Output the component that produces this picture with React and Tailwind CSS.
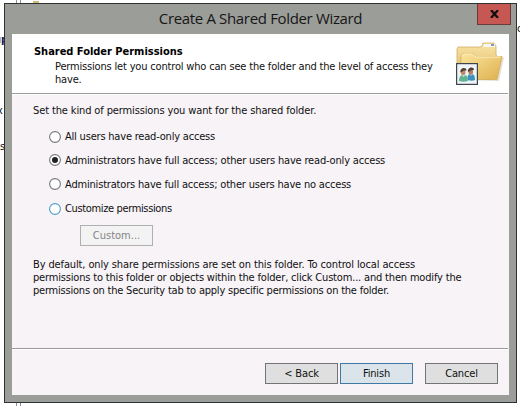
import React, { useState } from 'react';

const options = [
  { id: 'read', label: 'All users have read-only access', row: 'h-[23px]', track: 'tracking-[-0.2px]' },
  { id: 'admin-read', label: 'Administrators have full access; other users have read-only access', row: 'h-6', track: 'tracking-[-0.175px]' },
  { id: 'admin-only', label: 'Administrators have full access; other users have no access', row: 'h-6', track: 'tracking-[-0.185px]' },
  { id: 'custom', label: 'Customize permissions', row: 'h-[25px]', track: 'tracking-[-0.36px]' },
];

const FolderIcon = () => (
  <svg width="48" height="46" viewBox="0 0 48 46">
    <defs>
      <linearGradient id="front" x1="0" y1="0" x2="1" y2="1">
        <stop offset="0" stopColor="#fbe6a0" />
        <stop offset="1" stopColor="#dfb04e" />
      </linearGradient>
      <linearGradient id="back" x1="0" y1="0" x2="0" y2="1">
        <stop offset="0" stopColor="#f8e4a6" />
        <stop offset="1" stopColor="#dcb660" />
      </linearGradient>
    </defs>
    <path d="M6 39h37l5-24-3 1-4 22z" fill="#d8d3c6" opacity=".7" />
    <path d="M1 37V7l1-2h22l2-1 1-3h11l2 3v9l2 2-5 22z" fill="url(#back)" stroke="#d0ad62" strokeWidth=".8" />
    <path d="M27 4l1-2h11v3H27z" fill="#f7f7f2" />
    <path d="M35 3h3" stroke="#5078b0" strokeWidth="1.500" />
    <path d="M4.500 37.500l.5-23 2-3h10l3 3h26l-5 23z" fill="url(#front)" stroke="#d3ab54" strokeWidth=".8" />
    <path d="M6 14l1.500-2h9l3 3h25" fill="none" stroke="#fff3c4" />
    <rect x="0.600" y="21.600" width="20.800" height="20.800" fill="#eef3f5" stroke="#3d454e" strokeWidth="1.200" />
    <path d="M3 39c0-5 2-6 5-6s4 2 4 6c-3 1-6 1-9 0z" fill="#62b392" />
    <path d="M12 38c-1-4 0-6 3-6s4 2 4 6c-2 1-5 1-7 0z" fill="#3d91bd" />
    <path d="M6.500 33l1 2 1.500-2zM14 32l1 2 1-2z" fill="#e9f3f3" />
    <ellipse cx="7.200" cy="30.300" rx="2.300" ry="3" fill="#c18a66" />
    <ellipse cx="14.700" cy="29.800" rx="2.300" ry="3" fill="#b57d5c" />
    <path d="M4.500 30.500c-1-5 6-6 6-2-2 0-4 0-4 1zM12 30c-1-5 6-6 6-2-2 0-4 0-4 1z" fill="#513a30" />
  </svg>
);

const Radio = ({ checked, hot }) => (
  <svg width="12" height="12" viewBox="0 0 12 12" className="shrink-0">
    <circle cx="6" cy="6" r="5.4" fill="#fff" stroke={hot ? '#4c9fc8' : '#77777a'} strokeWidth="1.1" />
    {checked && <circle cx="6" cy="6" r="3" fill="#202020" />}
  </svg>
);

const App = () => {
  const [selected, setSelected] = useState('admin-read');

  return (
    <div className="relative w-[520px] h-[406px] overflow-hidden bg-white pl-1 pt-[3px] text-[11px] leading-[13px] text-[#101010] font-['DejaVu_Sans_Condensed','DejaVu_Sans',sans-serif]">
      {/* parts of the window behind the wizard */}
      <div className="absolute left-4 top-0 h-[406px] w-[5px] border-x border-[#8d9097]" />
      <div className="absolute left-[33px] top-[1px] h-[2px] w-[6px] bg-[#cfba7c]" />
      <span className="absolute left-[-6px] top-[33px] font-bold text-[#2a1b4a]">up</span>
      <span className="absolute left-[-3px] top-[104px]">x</span>
      <span className="absolute left-0 top-[140px]">s</span>
      <span className="absolute left-[517px] top-[22px]">c</span>

      <div className="relative flex h-[400px] w-[513px] flex-col border border-[#303336] bg-[#9b9d99] px-[7px] pb-[7px]">
        <div className="relative h-[30px] shrink-0">
          <h1 className="pt-[4px] text-center text-[15px] leading-5 tracking-[-0.34px] font-['Open_Sans',sans-serif] text-[#161616]">
            Create A Shared Folder Wizard
          </h1>
          <button className="absolute -right-[2px] top-0 flex h-[21px] w-[34px] items-center justify-center border border-t-0 border-[#693c39] bg-[#c65752]">
            <svg width="9" height="8" viewBox="0 0 9 8">
              <path d="M1 0l7 8M8 0L1 8" stroke="#141010" strokeWidth="2.3" />
            </svg>
          </button>
        </div>

        <div className="flex h-[59px] shrink-0 bg-white pl-[22px]">
          <div className="flex-1 pt-[11px] whitespace-nowrap">
            <h2 className="font-bold tracking-[-0.02px] text-black">Shared Folder Permissions</h2>
            <p className="pl-[21px] pt-[2px] tracking-[-0.175px]">
              Permissions let you control who can see the folder and the level of access they
              <br />
              have.
            </p>
          </div>
          <div className="mr-[5px] mt-[8px] w-[48px] shrink-0">
            <FolderIcon />
          </div>
        </div>

        <div className="flex flex-1 flex-col bg-[#f7f3f7]">
          <div className="mr-px h-[2px] border-t border-b border-t-[#9b9b9e] border-b-white" />
          <div className="h-[253px] whitespace-nowrap pl-[21px] pt-[9px]">
            <p className="tracking-[-0.125px]">Set the kind of permissions you want for the shared folder.</p>
            <div className="pl-4 pt-[8px]">
              {options.map((option) => (
                <label
                  key={option.id}
                  className={`flex items-center gap-1 ${option.row} ${option.track}`}
                  onClick={() => setSelected(option.id)}
                >
                  <Radio checked={selected === option.id} hot={option.id === 'custom'} />
                  {option.label}
                </label>
              ))}
            </div>
            <button disabled className="ml-[47px] mt-1 block h-[21px] w-[73px] border border-[#b0b0b3] bg-[#f4f3f4] text-[#838387]">
              Custom...
            </button>
            <p className="pt-[12px] tracking-[-0.125px]">
              By default, only share permissions are set on this folder. To control local access
              <br />
              <span className="tracking-[-0.175px]">
                permissions to this folder or objects within the folder, click Custom... and then modify the
              </span>
              <br />
              <span className="tracking-[-0.215px]">
                permissions on the Security tab to apply specific permissions on the folder.
              </span>
            </p>
          </div>
          <div className="mr-px h-[2px] border-t border-b border-t-[#9b9b9e] border-b-white" />
          <div className="flex justify-end pr-[11px] pt-[13px] tracking-[-0.15px]">
            <button className="mr-[2px] h-[21px] w-[73px] border border-[#747476] bg-[#dfdfdf]">&lt; Back</button>
            <button className="mr-3 h-[21px] w-[73px] border border-[#4079a3] bg-[#dae4ea]">Finish</button>
            <button className="h-[21px] w-[73px] border border-[#747476] bg-[#dfdfdf]">Cancel</button>
          </div>
        </div>
      </div>
    </div>
  );
};

export default App;
